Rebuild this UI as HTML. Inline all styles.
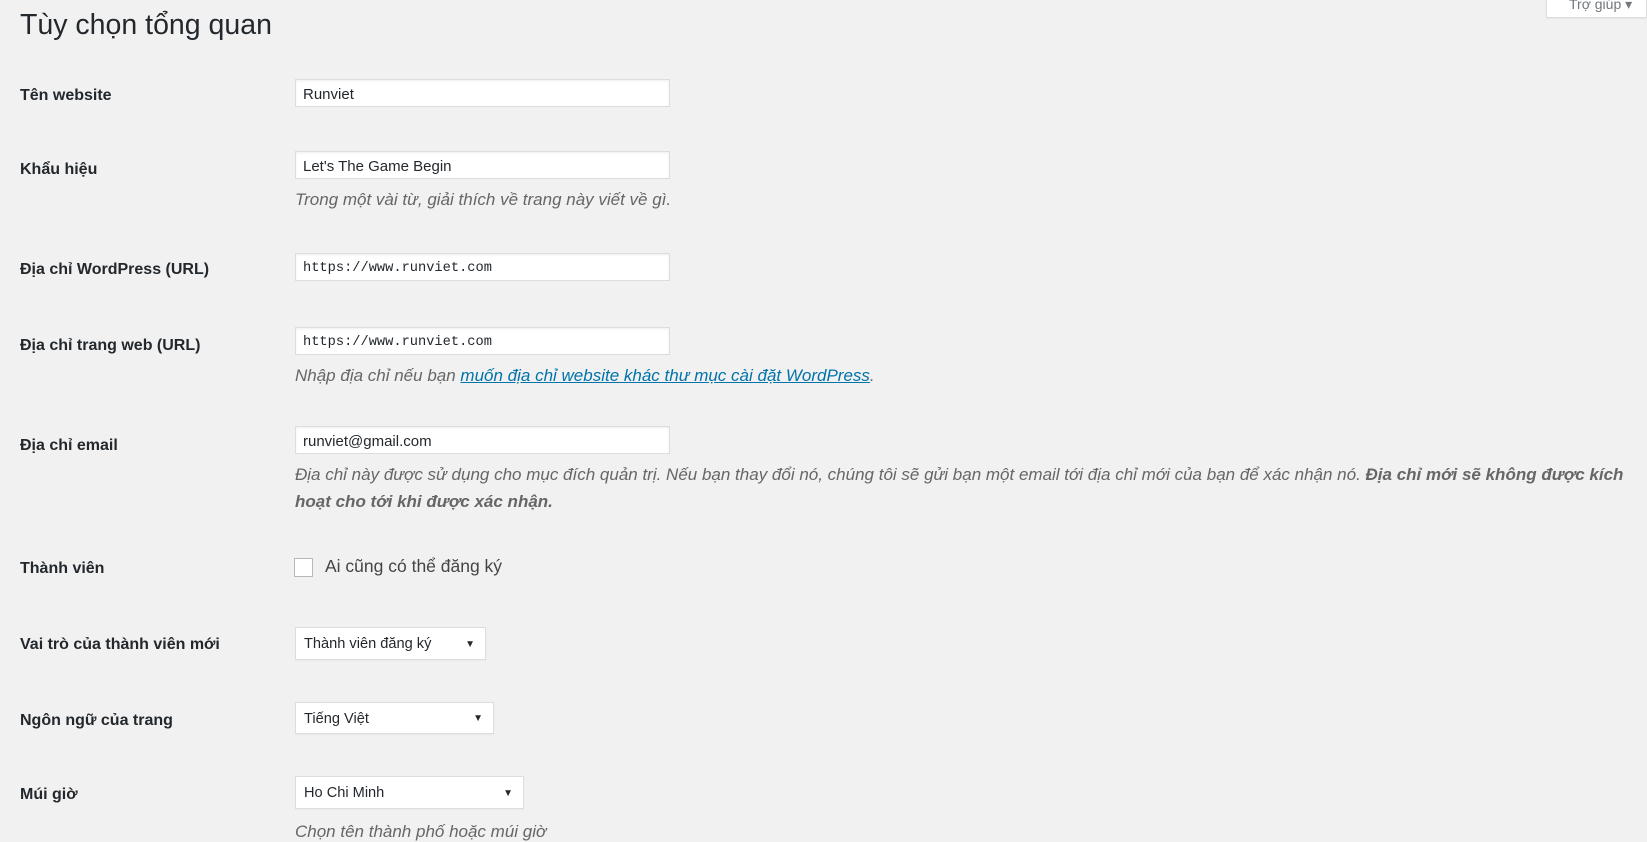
<!DOCTYPE html>
<html><head><meta charset="utf-8"><style>
body{margin:0;width:1647px;height:830px;background:#f1f1f1;font-family:"Liberation Sans","DejaVu Sans",sans-serif;color:#23282d;overflow:hidden;position:relative}
.a{position:absolute;white-space:nowrap}
h1{position:absolute;left:20px;top:9px;margin:0;font-weight:400;font-size:28.5px;color:#23282d}
.l{position:absolute;left:20px;font-size:16px;font-weight:600;transform:translateY(-50%)}
.in{position:absolute;left:295px;width:366px;height:24px;padding-top:2px;background:#fff;border:1px solid #ddd;box-shadow:inset 0 1px 2px rgba(0,0,0,.07);font-size:15px;line-height:26px;padding-left:7px;box-sizing:content-box}
.mono{font-family:"Liberation Mono",monospace;font-size:13.7px}
.d{position:absolute;left:295px;font-size:17px;font-style:italic;color:#666;transform:translateY(-50%)}
.d a{color:#0073aa;text-decoration:underline}
.sel{position:absolute;left:295px;background:#fff;border:1px solid #ddd;box-shadow:0 1px 1px rgba(0,0,0,.04);font-size:14.6px;box-sizing:border-box;padding-left:8px;padding-top:2px}
.sel span.ar{position:absolute;right:10px;font-size:10px}
</style></head><body>
<div class="a" style="left:1546px;top:-6px;width:101px;height:24px;background:#fff;border:1px solid #ddd;box-shadow:0 1px 1px rgba(0,0,0,.05);font-size:14px;color:#72777c;padding-left:22px;box-sizing:border-box;line-height:18px">Trợ giúp ▾</div>
<h1>Tùy chọn tổng quan</h1>

<div class="l" style="top:96px">Tên website</div>
<div class="in" style="top:79px">Runviet</div>

<div class="l" style="top:170px">Khẩu hiệu</div>
<div class="in" style="top:151px">Let's The Game Begin</div>
<div class="d" style="top:200px">Trong một vài từ, giải thích về trang này viết về gì.</div>

<div class="l" style="top:270px">Địa chỉ WordPress (URL)</div>
<div class="in mono" style="top:253px">https://www.runviet.com</div>

<div class="l" style="top:346px">Địa chỉ trang web (URL)</div>
<div class="in mono" style="top:327px">https://www.runviet.com</div>
<div class="d" style="top:376px">Nhập địa chỉ nếu bạn <a>muốn địa chỉ website khác thư mục cài đặt WordPress</a>.</div>

<div class="l" style="top:446px">Địa chỉ email</div>
<div class="in" style="top:426px">runviet@gmail.com</div>
<div class="d" style="top:475px">Địa chỉ này được sử dụng cho mục đích quản trị. Nếu bạn thay đổi nó, chúng tôi sẽ gửi bạn một email tới địa chỉ mới của bạn để xác nhận nó. <b>Địa chỉ mới sẽ không được kích</b></div>
<div class="d" style="top:502px"><b>hoạt cho tới khi được xác nhận.</b></div>

<div class="l" style="top:569px">Thành viên</div>
<div class="a" style="left:294px;top:558px;width:17px;height:17px;background:#fff;border:1px solid #b4b9be"></div>
<div class="a" style="left:325px;top:556px;font-size:17.5px;color:#444">Ai cũng có thể đăng ký</div>

<div class="l" style="top:645px">Vai trò của thành viên mới</div>
<div class="sel" style="top:627px;width:191px;height:33px;line-height:29px">Thành viên đăng ký<span class="ar">▼</span></div>

<div class="l" style="top:721px">Ngôn ngữ của trang</div>
<div class="sel" style="top:702px;width:199px;height:32px;line-height:28px">Tiếng Việt<span class="ar">▼</span></div>

<div class="l" style="top:795px">Múi giờ</div>
<div class="sel" style="top:776px;width:229px;height:33px;line-height:29px">Ho Chi Minh<span class="ar">▼</span></div>
<div class="d" style="top:832px">Chọn tên thành phố hoặc múi giờ</div>
</body></html>
